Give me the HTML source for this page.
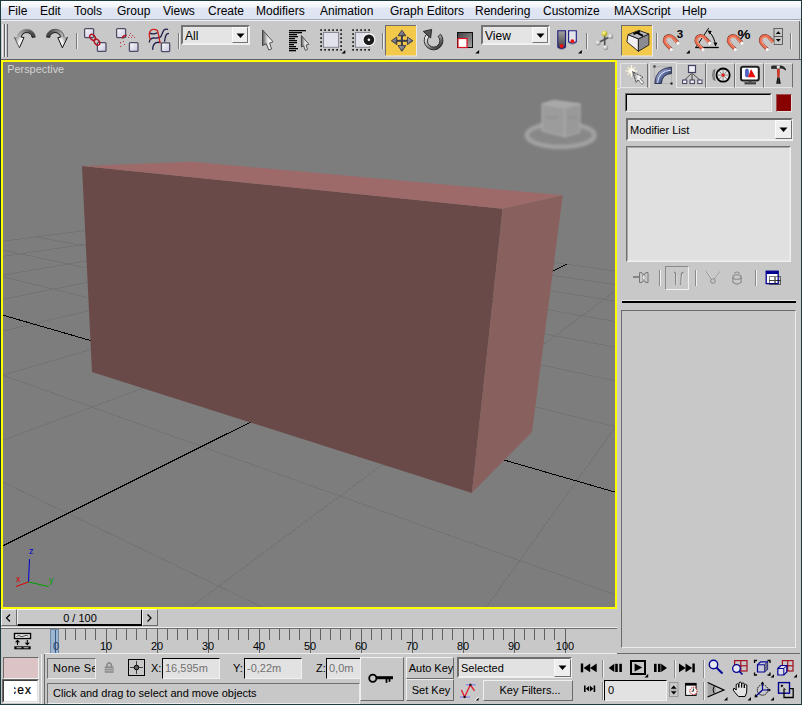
<!DOCTYPE html>
<html><head><meta charset="utf-8">
<style>
*{margin:0;padding:0;box-sizing:border-box}
html,body{width:802px;height:705px;overflow:hidden;background:#c8c8c8;font-family:"Liberation Sans",sans-serif;position:relative}
.a{position:absolute}
.mt{position:absolute;top:4px;font-size:12px;color:#000;white-space:nowrap;line-height:14px}
.sunk{position:absolute;border-style:solid;border-width:1px;border-color:#7a7a7a #fff #fff #7a7a7a}
.rais{position:absolute;border-style:solid;border-width:1px;border-color:#fff #5a5a5a #5a5a5a #fff}
.sep{position:absolute;width:2px;border-left:1px solid #8a8a8a;border-right:1px solid #f0f0f0}
.t11{font-size:11px;line-height:13px;white-space:nowrap}
</style></head><body>
<!-- window frame -->
<div class="a" style="left:0;top:0;width:802px;height:705px;border:1px solid #1f3a3c"></div>

<!-- menu bar -->
<div class="a" style="left:1px;top:1px;width:800px;height:18px;background:linear-gradient(#fcfdfe 0px,#f1f3f9 6px,#e0e6f3 7px,#dde3f1 18px)"></div>
<div class="a" style="left:1px;top:19px;width:800px;height:1px;background:#a3a8b6"></div>
<div class="a" style="left:1px;top:20px;width:800px;height:1px;background:#f2f2f4"></div>
<div class="mt" style="left:8px">File</div>
<div class="mt" style="left:40px">Edit</div>
<div class="mt" style="left:74px">Tools</div>
<div class="mt" style="left:117px">Group</div>
<div class="mt" style="left:163px">Views</div>
<div class="mt" style="left:208px">Create</div>
<div class="mt" style="left:256px">Modifiers</div>
<div class="mt" style="left:320px">Animation</div>
<div class="mt" style="left:390px">Graph Editors</div>
<div class="mt" style="left:475px">Rendering</div>
<div class="mt" style="left:543px">Customize</div>
<div class="mt" style="left:614px">MAXScript</div>
<div class="mt" style="left:682px">Help</div>

<!-- toolbar -->
<div class="a" style="left:1px;top:21px;width:800px;height:38px;background:#c8c8c8"></div>
<div class="a" style="left:1px;top:59px;width:800px;height:1px;background:#5e5e68"></div>
<!-- TOOLBAR_SVG -->
<svg class="a" style="left:0;top:0" width="802" height="60" viewBox="0 0 802 60">
<defs>
<linearGradient id="gUndo" x1="1" y1="0" x2="0" y2="1"><stop offset="0" stop-color="#3a3a3a"/><stop offset="0.55" stop-color="#9a9a9a"/><stop offset="1" stop-color="#f4f4f4"/></linearGradient>
<linearGradient id="gRedo" x1="0" y1="0" x2="1" y2="1"><stop offset="0" stop-color="#3a3a3a"/><stop offset="0.55" stop-color="#9a9a9a"/><stop offset="1" stop-color="#f4f4f4"/></linearGradient>
<linearGradient id="gSq" x1="0" y1="0" x2="1" y2="1"><stop offset="0" stop-color="#ffffff"/><stop offset="1" stop-color="#c4c4dc"/></linearGradient>
<linearGradient id="gPtr" x1="0" y1="0" x2="1" y2="0"><stop offset="0" stop-color="#5a5a5a"/><stop offset="0.5" stop-color="#e8e8e8"/><stop offset="1" stop-color="#ffffff"/></linearGradient>
<linearGradient id="gRot" x1="0" y1="0.2" x2="0.8" y2="1"><stop offset="0" stop-color="#f4f4f4"/><stop offset="0.45" stop-color="#a0a0a0"/><stop offset="1" stop-color="#262626"/></linearGradient>
<linearGradient id="gScl" x1="0" y1="0" x2="1" y2="1"><stop offset="0" stop-color="#3c3c3c"/><stop offset="1" stop-color="#a8a8a8"/></linearGradient>
<linearGradient id="gTube" x1="0" y1="0" x2="0" y2="1"><stop offset="0" stop-color="#a0a0a0"/><stop offset="1" stop-color="#404040"/></linearGradient>
<linearGradient id="gArrowHead" x1="0" y1="0" x2="1" y2="1"><stop offset="0" stop-color="#b4b4c0"/><stop offset="1" stop-color="#4c4c5a"/></linearGradient>
<radialGradient id="gBall" cx="0.35" cy="0.35" r="0.7"><stop offset="0" stop-color="#ffffff"/><stop offset="1" stop-color="#8a8a8a"/></radialGradient>
<radialGradient id="gBallY" cx="0.35" cy="0.35" r="0.7"><stop offset="0" stop-color="#ffff90"/><stop offset="1" stop-color="#b0a020"/></radialGradient>
</defs>
<!-- grip -->
<rect x="2" y="24" width="1" height="33" fill="#f0f0f0"/><rect x="4" y="24" width="1" height="33" fill="#606068"/>
<rect x="5" y="24" width="1" height="33" fill="#ececec"/><rect x="7" y="24" width="1" height="33" fill="#606068"/>
<!-- undo -->
<linearGradient id="gU1" gradientUnits="userSpaceOnUse" x1="35" y1="34" x2="18" y2="38"><stop offset="0" stop-color="#3a3a3a"/><stop offset="0.6" stop-color="#8a8a8a"/><stop offset="1" stop-color="#bcbcbc"/></linearGradient>
<linearGradient id="gU2" gradientUnits="userSpaceOnUse" x1="15" y1="38" x2="23" y2="43"><stop offset="0" stop-color="#8a8a8a"/><stop offset="0.6" stop-color="#f0f0f0"/><stop offset="1" stop-color="#ffffff"/></linearGradient>
<linearGradient id="gR1" gradientUnits="userSpaceOnUse" x1="46.8" y1="34" x2="63.8" y2="38"><stop offset="0" stop-color="#3a3a3a"/><stop offset="0.6" stop-color="#8a8a8a"/><stop offset="1" stop-color="#bcbcbc"/></linearGradient>
<linearGradient id="gR2" gradientUnits="userSpaceOnUse" x1="58" y1="43" x2="67" y2="38"><stop offset="0" stop-color="#ffffff"/><stop offset="0.4" stop-color="#f0f0f0"/><stop offset="1" stop-color="#8a8a8a"/></linearGradient>
<path d="M14.3,37.2 L17.7,37.2 A8.8,7.7 0 0 1 35.5,36.9 L32,37.3 A5.3,4.7 0 0 0 21.4,37.2 L24,37.6 L19.4,47.8 Z" fill="url(#gU1)"/>
<path d="M14.3,37.2 L19.4,47.8 L24,37.6 L21.4,37.2 L17.7,37.2 Z" fill="url(#gU2)"/>
<path d="M35.5,36.9 L32,37.3 A5.3,4.7 0 0 0 21.4,37.2 L24,37.6 L19.4,47.8" stroke="#141414" stroke-width="1" fill="none" stroke-linejoin="round"/>
<path d="M14.3,37.2 L19.4,47.8" stroke="#505050" stroke-width="0.9" fill="none"/>
<path d="M17.7,37.2 A8.8,7.7 0 0 1 35.5,36.9" stroke="#7a7a7a" stroke-width="0.6" fill="none"/>
<!-- redo -->
<path d="M67.5,37.2 L64.1,37.2 A8.8,7.7 0 0 0 46.3,36.9 L49.8,37.3 A5.3,4.7 0 0 1 60.4,37.2 L57.8,37.6 L62.4,47.8 Z" fill="url(#gR1)"/>
<path d="M67.5,37.2 L62.4,47.8 L57.8,37.6 L60.4,37.2 L64.1,37.2 Z" fill="url(#gR2)"/>
<path d="M46.3,36.9 L49.8,37.3 A5.3,4.7 0 0 1 60.4,37.2 L57.8,37.6 L62.4,47.8 L67.5,37.2" stroke="#141414" stroke-width="1" fill="none" stroke-linejoin="round"/>
<path d="M64.1,37.2 A8.8,7.7 0 0 0 46.3,36.9" stroke="#505050" stroke-width="0.8" fill="none"/>
<rect x="76" y="33" width="1" height="16" fill="#7a7a7a"/><rect x="77" y="33" width="1" height="16" fill="#ececec"/>
<!-- link -->
<g stroke="#4c4c66" stroke-width="1.3">
<rect x="84.6" y="28.6" width="9" height="9" rx="1" fill="url(#gSq)"/>
<rect x="97.4" y="42.6" width="8.6" height="8.8" rx="1" fill="url(#gSq)"/>
</g>
<g stroke="#b01020" stroke-width="1.4" fill="none">
<ellipse cx="92.6" cy="37.3" rx="3.4" ry="2.3" transform="rotate(50 92.6 37.3)"/>
<ellipse cx="97" cy="42.2" rx="3.4" ry="2.3" transform="rotate(50 97 42.2)"/>
</g>
<!-- unlink -->
<g stroke="#4c4c66" stroke-width="1.3">
<rect x="116.6" y="28.6" width="9" height="9" rx="1" fill="url(#gSq)"/>
<rect x="129.4" y="42.6" width="8.6" height="8.8" rx="1" fill="url(#gSq)"/>
</g>
<path d="M122.3,38.4 Q123,35 126.6,35.5" stroke="#b01020" stroke-width="1.6" fill="none"/>
<g fill="#c04050">
<rect x="130" y="33" width="1" height="1"/><rect x="129" y="35" width="1" height="1"/><rect x="132" y="35" width="1.2" height="1"/><rect x="128" y="37" width="1" height="1"/><rect x="131" y="37" width="1" height="1"/><rect x="134" y="37" width="1" height="1"/>
<rect x="120" y="42" width="1" height="1.4"/><rect x="120" y="46" width="1.4" height="1"/><rect x="124" y="44" width="1" height="1"/><rect x="123" y="41" width="1" height="1"/>
</g>
<!-- bind space warp -->
<g stroke="#1c1c4c" stroke-width="1.3" fill="none" stroke-linecap="round">
<path d="M149.7,33.1 Q153.5,35 157.3,32.7"/>
<path d="M149.3,42 Q149.8,38.5 153.5,37.8 Q157.8,38.8 160.7,36.9 Q162.4,33 163.7,30.2 Q165.5,28.8 167.6,29.4"/>
<path d="M152.7,49.3 Q152.6,44.6 156,42.6 Q158.5,42 160,42.4"/>
<path d="M164.6,41.2 Q165,37 166.3,34.6 Q167.2,33.6 168.4,33.5"/>
</g>
<path d="M160.1,43.3 Q159,36 157.5,30.6 Q155,29 152,29.6 Q149,31 149.3,35.6 Q149.6,38 150.3,39.5" stroke="#d02020" stroke-width="1.3" fill="none"/>
<rect x="161.4" y="42.9" width="8.3" height="8.7" rx="0.8" fill="url(#gSq)" stroke="#4c4c66" stroke-width="1.3"/>
<rect x="178" y="33" width="1" height="16" fill="#7a7a7a"/><rect x="179" y="33" width="1" height="16" fill="#ececec"/>
<!-- select pointer -->
<path d="M262.5,29.9 L273,41.8 L269.6,43 L271.5,49 L268.8,50 L266.2,43.7 L262.5,45.6 Z" fill="url(#gPtr)" stroke="#303030" stroke-width="0.8" stroke-linejoin="round"/>
<!-- select by name -->
<g fill="#000">
<rect x="289" y="30" width="17" height="1.3"/><rect x="289" y="32" width="13" height="1.3"/><rect x="289" y="34" width="8" height="1.3"/>
<rect x="289" y="36" width="9" height="1.3"/><rect x="289" y="38" width="6" height="1.3"/><rect x="289" y="40" width="8" height="1.3"/>
<rect x="289" y="42" width="8" height="1.3"/><rect x="289" y="44" width="5" height="1.3"/><rect x="289" y="46" width="7" height="1.3"/>
<rect x="289" y="48" width="9" height="1.3"/><rect x="289" y="50" width="7" height="1.3"/>
</g>
<path d="M301.4,35.5 L308.9,44.4 L306,45 L307.5,49.5 L305.3,50.3 L303.6,45.8 L301.4,47 Z" fill="url(#gPtr)" stroke="#303030" stroke-width="0.8" stroke-linejoin="round"/>
<!-- rect select -->
<g fill="#000">
<rect x="320.3" y="29.3" width="1.6" height="1.6"/><rect x="324.3" y="29.3" width="1.6" height="1.6"/><rect x="328.3" y="29.3" width="1.6" height="1.6"/><rect x="332.3" y="29.3" width="1.6" height="1.6"/><rect x="336.3" y="29.3" width="1.6" height="1.6"/><rect x="340.3" y="29.3" width="1.6" height="1.6"/>
<rect x="320.3" y="49" width="1.6" height="1.6"/><rect x="324.3" y="49" width="1.6" height="1.6"/><rect x="328.3" y="49" width="1.6" height="1.6"/><rect x="332.3" y="49" width="1.6" height="1.6"/><rect x="336.3" y="49" width="1.6" height="1.6"/><rect x="340.3" y="49" width="1.6" height="1.6"/>
<rect x="320.3" y="33.3" width="1.6" height="1.6"/><rect x="320.3" y="37.3" width="1.6" height="1.6"/><rect x="320.3" y="41.3" width="1.6" height="1.6"/><rect x="320.3" y="45.3" width="1.6" height="1.6"/>
<rect x="340.3" y="33.3" width="1.6" height="1.6"/><rect x="340.3" y="37.3" width="1.6" height="1.6"/><rect x="340.3" y="41.3" width="1.6" height="1.6"/><rect x="340.3" y="45.3" width="1.6" height="1.6"/>
</g>
<rect x="323.5" y="32.5" width="15" height="14.8" fill="#e2e2ea" stroke="#8a8a96" stroke-width="1"/>
<!-- window crossing -->
<g fill="#000">
<rect x="352.3" y="29.3" width="1.6" height="1.6"/><rect x="356.3" y="29.3" width="1.6" height="1.6"/><rect x="360.3" y="29.3" width="1.6" height="1.6"/><rect x="364.3" y="29.3" width="1.6" height="1.6"/><rect x="368.3" y="29.3" width="1.6" height="1.6"/>
<rect x="352.3" y="49" width="1.6" height="1.6"/><rect x="356.3" y="49" width="1.6" height="1.6"/><rect x="360.3" y="49" width="1.6" height="1.6"/><rect x="364.3" y="49" width="1.6" height="1.6"/><rect x="368.3" y="49" width="1.6" height="1.6"/>
<rect x="352.3" y="33.3" width="1.6" height="1.6"/><rect x="352.3" y="37.3" width="1.6" height="1.6"/><rect x="352.3" y="41.3" width="1.6" height="1.6"/><rect x="352.3" y="45.3" width="1.6" height="1.6"/>
</g>
<rect x="355.5" y="32.5" width="14" height="14.8" fill="#e2e2ea" stroke="#8a8a96" stroke-width="1"/>
<circle cx="368.9" cy="39.7" r="6.6" fill="#f4f4f4"/>
<circle cx="368.9" cy="39.7" r="5.3" fill="#1a1a1a"/>
<circle cx="368.9" cy="39.7" r="1.3" fill="#fff"/>
<rect x="382" y="33" width="1" height="16" fill="#7a7a7a"/><rect x="383" y="33" width="1" height="16" fill="#ececec"/>
<!-- move button -->
<rect x="385" y="25" width="31.5" height="31" fill="#f3c94c"/>
<rect x="385" y="25" width="31" height="1" fill="#6e6e6e"/><rect x="385" y="25" width="1" height="31" fill="#6e6e6e"/>
<rect x="416" y="25" width="1" height="31" fill="#e8e8ee"/><rect x="385" y="55.5" width="32" height="1" fill="#e8e8ee"/>
<g fill="#3c3c48"><rect x="395" y="39.8" width="14" height="2"/><rect x="400.9" y="34" width="2" height="13.5"/></g>
<g fill="url(#gArrowHead)" stroke="#33333f" stroke-width="0.9" stroke-linejoin="round">
<path d="M401.9,30.2 L405.8,35.8 L398,35.8 Z"/><path d="M401.9,51.3 L405.8,45.6 L398,45.6 Z"/>
<path d="M391.4,40.8 L396.8,37 L396.8,44.6 Z"/><path d="M412.9,40.8 L407.4,37 L407.4,44.6 Z"/>
</g>
<!-- rotate -->
<path d="M426.3,34.5 A9.4,9.4 0 1 0 440.6,34.2 L438,36.5 A6.2,6.2 0 1 1 429.2,36.6 Z" fill="url(#gRot)" stroke="#222" stroke-width="0.9"/>
<path d="M423.3,31.4 L431.7,29.4 L430.6,38 Z" fill="#555" stroke="#222" stroke-width="0.9" stroke-linejoin="round"/>
<!-- scale -->
<rect x="457.5" y="32.5" width="15" height="15" fill="url(#gScl)" stroke="#111" stroke-width="1"/>
<rect x="458" y="38.5" width="9" height="9" fill="#fff" stroke="#e01020" stroke-width="1.2"/>
<path d="M475.2,53.6 L479.1,53.6 L479.1,50 Z" fill="#000"/>
<path d="M341.5,53.6 L345.3,53.6 L345.3,50 Z" fill="#000"/>
<!-- pivot -->
<path d="M557.8,30.8 L565.5,30.8 L565.5,47 Q561.6,50 557.8,47 Z" fill="url(#gTube)" stroke="#1c1c80" stroke-width="1.1"/>
<path d="M557,47.5 Q561.6,51.5 566.3,47.5" stroke="#909090" stroke-width="0.8" fill="none"/>
<circle cx="561.6" cy="46" r="1.9" fill="#ee1010"/>
<path d="M568.6,30.8 L576.3,30.8 L576.3,41.8 Q572.4,44.8 568.6,41.8 Z" fill="#e4e4ec" stroke="#1c1c80" stroke-width="1.1"/>
<path d="M567.8,42.3 Q572.4,46.3 577.1,42.3" stroke="#909090" stroke-width="0.8" fill="none"/>
<circle cx="572.4" cy="41.2" r="1.9" fill="#ee1010"/>
<path d="M578,53.6 L581.8,53.6 L581.8,50 Z" fill="#000"/>
<rect x="586" y="33" width="1" height="16" fill="#7a7a7a"/><rect x="587" y="33" width="1" height="16" fill="#ececec"/>
<!-- manipulate -->
<g stroke="#505050" stroke-width="1.6"><line x1="604.6" y1="34" x2="604.8" y2="47"/><line x1="598" y1="42.8" x2="610.5" y2="36.5"/></g>
<circle cx="604.5" cy="33.6" r="2.9" fill="url(#gBallY)"/>
<circle cx="610.6" cy="36.4" r="2.6" fill="url(#gBall)"/>
<circle cx="598" cy="42.8" r="2.6" fill="url(#gBall)"/>
<circle cx="605.6" cy="47.6" r="2.6" fill="url(#gBall)"/>
<!-- keyboard override -->
<rect x="621" y="25" width="31.5" height="31" fill="#f3c94c"/>
<rect x="621" y="25" width="31" height="1" fill="#6e6e6e"/><rect x="621" y="25" width="1" height="31" fill="#6e6e6e"/>
<rect x="652" y="25" width="1" height="31" fill="#e8e8ee"/><rect x="621" y="55.5" width="32" height="1" fill="#e8e8ee"/>
<g stroke="#1a1a1a" stroke-width="0.9" stroke-linejoin="round">
<path d="M626.9,41.9 L628,34.6 L638.4,38.8 L638.4,51.3 Z" fill="#f0f0f4"/>
<path d="M638.4,38.8 L648.9,34 L648.9,45 L638.4,51.3 Z" fill="#8a8a90"/>
<path d="M628,34.6 L638.9,30.4 L648.9,34 L638.4,38.8 Z" fill="#b8b8c0"/>
</g>
<path d="M633.5,34 L639.8,31.4 M636.8,32.7 L643,35.9" stroke="#000" stroke-width="2" fill="none"/>
<rect x="656" y="33" width="1" height="16" fill="#7a7a7a"/><rect x="657" y="33" width="1" height="16" fill="#ececec"/>
<!-- magnets -->
<path d="M695.2,47.5 L718.7,47.5" stroke="#000" stroke-width="1.3"/>
<path d="M696.3,46.6 L708.7,28.1" stroke="#000" stroke-width="1"/>
<g id="mag">
<path d="M671.2,49.3 L666.4,44.4 Q663.2,40.6 665.8,37.2 Q669.4,34.2 673.2,37.8 L677.9,42.8" stroke="#6a3a30" stroke-width="3.6" fill="none"/>
<path d="M671.2,49.3 L666.4,44.4 Q663.2,40.6 665.8,37.2 Q669.4,34.2 673.2,37.8 L677.9,42.8" stroke="#ea6a4c" stroke-width="2.6" fill="none"/>
<path d="M670.6,47.2 L667.2,43.8 Q664.8,40.8 666.6,38.2 Q669.2,36 672.2,38.6 L676,42.6" stroke="#f8b8a4" stroke-width="0.9" fill="none"/>
<rect x="669.9" y="48.3" width="2.6" height="2.6" fill="#fff" transform="rotate(45 671.2 49.6)"/>
<rect x="676.6" y="41.9" width="2.6" height="2.6" fill="#fff" transform="rotate(45 677.9 43.2)"/>
</g>
<use href="#mag" x="31.7" y="0"/>
<use href="#mag" x="64" y="0"/>
<use href="#mag" x="96" y="0"/>
<text x="676.8" y="37.6" font-size="11.5" font-weight="bold" font-family="Liberation Sans" fill="#000">3</text>
<path d="M686,53.6 L689.8,53.6 L689.8,50 Z" fill="#000"/>
<path d="M709.5,32.3 Q714.5,37 715.6,45.9" stroke="#000" stroke-width="1" fill="none"/>
<path d="M707.5,30.5 L711.8,31 L709.5,34.3 Z M715.6,46.4 L713.5,42.5 L717.4,42.7 Z" fill="#000"/>
<text x="737.6" y="38.8" font-size="13.5" font-weight="bold" font-family="Liberation Sans" fill="#000" textLength="13" lengthAdjust="spacingAndGlyphs">%</text>
<rect x="774" y="28.5" width="8.5" height="8" fill="#c8c8c8" stroke="#555" stroke-width="0.9"/>
<rect x="774" y="36.5" width="8.5" height="8" fill="#c8c8c8" stroke="#555" stroke-width="0.9"/>
<path d="M775.8,34 L780.8,34 L778.3,31.2 Z M775.8,39 L780.8,39 L778.3,41.8 Z" fill="#000"/>
<rect x="790" y="33" width="1" height="16" fill="#7a7a7a"/><rect x="791" y="33" width="1" height="16" fill="#ececec"/>
<rect x="799" y="21" width="1" height="38" fill="#6a6a6a"/>
<rect x="800" y="21" width="1" height="38" fill="#d8d8d8"/>
</svg>

<!-- /TOOLBAR_SVG -->
<!-- DROPDOWNS -->
<div class="a" style="left:181px;top:25px;width:69px;height:20px;border:2px solid;border-color:#747474 #f0f0f0 #f0f0f0 #747474;background:#e4e4e4"></div>
<div class="a t11" style="left:185px;top:30px;color:#000;font-size:12px">All</div>
<div class="a" style="left:232px;top:27px;width:16px;height:16px;background:#eeeeee;border:1px solid;border-color:#fafafa #747474 #747474 #fafafa"></div>
<svg class="a" style="left:236px;top:33px" width="9" height="6"><polygon points="0.5,0.5 8.5,0.5 4.5,5" fill="#000"/></svg>
<div class="a" style="left:481px;top:25px;width:69px;height:20px;border:2px solid;border-color:#747474 #f0f0f0 #f0f0f0 #747474;background:#e4e4e4"></div>
<div class="a t11" style="left:485px;top:30px;color:#000;font-size:12px">View</div>
<div class="a" style="left:532px;top:27px;width:16px;height:16px;background:#eeeeee;border:1px solid;border-color:#fafafa #747474 #747474 #fafafa"></div>
<svg class="a" style="left:536px;top:33px" width="9" height="6"><polygon points="0.5,0.5 8.5,0.5 4.5,5" fill="#000"/></svg>


<!-- viewport -->
<div class="a" style="left:1px;top:60px;width:616px;height:549px;background:#ffff00"></div>
<svg class="a" style="left:3px;top:62px" width="612" height="545" viewBox="3 62 612 545">
<rect x="3" y="62" width="612" height="545" fill="#7d7d7d"/>
<g stroke="#737373" stroke-width="1" shape-rendering="crispEdges"><line x1="21680.1" y1="10527.1" x2="1282.0" y2="363.6"/><line x1="-21440.4" y1="8753.0" x2="-1833.6" y2="477.6"/><line x1="16182.3" y1="10300.9" x2="1138.7" y2="343.7"/><line x1="-13004.7" y1="9100.1" x2="-1323.7" y2="412.0"/><line x1="10684.4" y1="10074.7" x2="1013.5" y2="326.3"/><line x1="-4569.0" y1="9447.1" x2="-977.9" y2="367.5"/><line x1="5186.6" y1="9848.5" x2="903.0" y2="310.9"/><line x1="3866.6" y1="9794.2" x2="-728.1" y2="335.3"/><line x1="-311.3" y1="9622.3" x2="804.8" y2="297.3"/><line x1="12302.3" y1="10141.2" x2="-539.0" y2="311.0"/><line x1="-5809.1" y1="9396.1" x2="717.0" y2="285.1"/><line x1="20738.0" y1="10488.3" x2="-391.1" y2="291.9"/><line x1="-11306.9" y1="9169.9" x2="638.0" y2="274.1"/><line x1="4649.0" y1="2041.2" x2="-272.1" y2="276.6"/><line x1="-14467.9" y1="5810.2" x2="501.5" y2="255.2"/><line x1="2171.6" y1="806.8" x2="-92.5" y2="253.5"/><line x1="-5165.3" y1="1883.8" x2="442.3" y2="246.9"/><line x1="1842.0" y1="642.6" x2="-23.2" y2="244.5"/><line x1="-3416.7" y1="1145.8" x2="387.9" y2="239.4"/><line x1="1641.9" y1="542.9" x2="36.5" y2="236.9"/><line x1="-2678.1" y1="834.1" x2="337.9" y2="232.4"/><line x1="1507.6" y1="476.0" x2="88.2" y2="230.2"/><line x1="-2270.4" y1="662.0" x2="291.8" y2="226.0"/><line x1="1411.2" y1="427.9" x2="133.6" y2="224.3"/><line x1="-2012.0" y1="552.9" x2="249.1" y2="220.1"/><line x1="1338.6" y1="391.8" x2="173.8" y2="219.2"/><line x1="-1833.6" y1="477.6" x2="209.5" y2="214.6"/><line x1="1282.0" y1="363.6" x2="209.5" y2="214.6"/></g>
<g stroke="#000" stroke-width="1" shape-rendering="crispEdges"><line x1="2817.0" y1="1128.4" x2="-174.3" y2="264.0"/><line x1="-16804.8" y1="8943.7" x2="566.5" y2="264.2"/></g>
<polygon points="82,166 502.6,208.7 471.9,493 92,372" fill="#694a48"/>
<polygon points="502.6,208.7 562.7,195.3 532,432 471.9,493" fill="#88605d"/>
<polygon points="82,166 192.4,161.8 562.7,195.3 502.6,208.7" fill="#9d6a69"/>
<!-- viewcube -->
<defs><filter id="blur1" x="-20%" y="-20%" width="140%" height="140%"><feGaussianBlur stdDeviation="0.8"/></filter>
<filter id="blur2" x="-20%" y="-50%" width="140%" height="200%"><feGaussianBlur stdDeviation="1.6"/></filter></defs>
<g filter="url(#blur2)">
<ellipse cx="560.7" cy="135.2" rx="34" ry="11.8" fill="#888888" stroke="#a6a6a6" stroke-width="4"/>
</g>
<g filter="url(#blur1)">
<polygon points="542,104 553.5,100.4 580.3,103.9 565,107.8" fill="#a8a8a8" stroke="#b4b4b4" stroke-width="1"/>
<polygon points="542,104 565,107.8 565,136.8 542,130.8" fill="#9c9c9c" stroke="#b0b0b0" stroke-width="1"/>
<polygon points="565,107.8 580.3,103.9 579.7,132.4 565,136.8" fill="#999999" stroke="#acacac" stroke-width="1"/>
</g>
<g fill="#8e8e8e" opacity="0.5" filter="url(#blur1)"><rect x="546" y="116" width="12" height="3"/><rect x="568" y="116" width="9" height="3"/></g>
<!-- tripod -->
<g stroke-width="1" fill="none">
<polyline points="28.5,582 29.5,559" stroke="#0000d0"/>
<polyline points="28.5,582 16,586.5" stroke="#e00000"/>
<polyline points="28.5,582 48.5,586.5" stroke="#00a000"/>
</g>
<text x="29" y="554" font-size="9" fill="#0000d0" font-family="Liberation Sans">z</text>
<text x="16" y="582" font-size="9" fill="#e00000" font-family="Liberation Sans">x</text>
<text x="49" y="583" font-size="9" fill="#00a000" font-family="Liberation Sans">y</text>
<text x="7.2" y="73.2" font-size="11" fill="#d2d2d2" font-family="Liberation Sans" textLength="57" lengthAdjust="spacingAndGlyphs">Perspective</text>
</svg>

<!-- command panel -->
<div class="a" style="left:617px;top:60px;width:184px;height:594px;background:#c8c8c8"></div>
<!-- tabs -->
<div class="a" style="left:620px;top:63px;width:28px;height:25px;border:1px solid #e4e4e4;border-right-color:#6e6e6e;border-bottom-color:#e4e4e4;border-radius:2px 2px 0 0"></div>
<div class="a" style="left:649px;top:62px;width:28px;height:26px;border:1px solid #e8e8e8;border-bottom:none;border-radius:2px 2px 0 0"></div>
<div class="a" style="left:677px;top:63px;width:29px;height:25px;border:1px solid #e4e4e4;border-right-color:#6e6e6e;border-bottom-color:#e4e4e4;border-left:none"></div>
<div class="a" style="left:706px;top:63px;width:29px;height:25px;border:1px solid #e4e4e4;border-right-color:#6e6e6e;border-bottom-color:#e4e4e4"></div>
<div class="a" style="left:735px;top:63px;width:29px;height:25px;border:1px solid #e4e4e4;border-right-color:#6e6e6e;border-bottom-color:#e4e4e4"></div>
<div class="a" style="left:764px;top:63px;width:29px;height:25px;border:1px solid #e4e4e4;border-right-color:#6e6e6e;border-bottom-color:#e4e4e4"></div>
<div class="a" style="left:617px;top:88px;width:3px;height:1px;background:#e4e4e4"></div>
<!-- name field -->
<div class="a" style="left:625px;top:93px;width:147px;height:19px;border:1px solid;border-color:#6a6a6a #f0f0f0 #f0f0f0 #6a6a6a;background:#e0e0e0"></div>
<div class="a" style="left:626px;top:94px;width:145px;height:17px;border:1px solid;border-color:#000 #d8d8d8 #d8d8d8 #000"></div>
<div class="a" style="left:776px;top:94px;width:16px;height:18px;background:#880000;border:1px solid;border-color:#a05050 #e0e0e0 #e0e0e0 #a05050"></div>
<!-- modifier list -->
<div class="a" style="left:626px;top:118px;width:167px;height:23px;border:2px solid;border-color:#6e6e6e #f0f0f0 #f0f0f0 #6e6e6e;background:#e2e2e2"></div>
<div class="a t11" style="left:630px;top:124px;color:#000">Modifier List</div>
<div class="a" style="left:775px;top:120px;width:17px;height:19px;background:#eeeeee;border:1px solid;border-color:#fafafa #6e6e6e #6e6e6e #fafafa"></div>
<svg class="a" style="left:779px;top:127px" width="9" height="6"><polygon points="0.5,0.5 8.5,0.5 4.5,5" fill="#000"/></svg>
<!-- stack -->
<div class="a" style="left:626px;top:146px;width:165px;height:116px;border:1px solid;border-color:#6e6e6e #f0f0f0 #f0f0f0 #6e6e6e;background:#e0e0e0"></div>
<div class="a" style="left:627px;top:147px;width:163px;height:114px;border:1px solid;border-color:#a8a8a8 #e8e8e8 #e8e8e8 #a8a8a8"></div>
<!-- stack seps -->
<div class="sep" style="left:659px;top:270px;height:16px"></div>
<div class="a" style="left:665px;top:266px;width:24px;height:24px;border:1px solid;border-color:#8a8a8a #f0f0f0 #f0f0f0 #8a8a8a"></div>
<div class="sep" style="left:695px;top:270px;height:16px"></div>
<div class="sep" style="left:755px;top:270px;height:16px"></div>
<!-- TABS_SVG -->
<svg class="a" style="left:617px;top:60px" width="185" height="245" viewBox="617 60 185 245">
<defs>
<radialGradient id="gStar" cx="0.5" cy="0.5" r="0.5"><stop offset="0" stop-color="#ffffff"/><stop offset="0.35" stop-color="#fff4c0"/><stop offset="1" stop-color="#c8c8c8" stop-opacity="0"/></radialGradient>
<linearGradient id="gArc" gradientUnits="userSpaceOnUse" x1="656" y1="70" x2="670" y2="82"><stop offset="0" stop-color="#c8d0f0"/><stop offset="0.5" stop-color="#5a6a9a"/><stop offset="1" stop-color="#1a2040"/></linearGradient>
<linearGradient id="gP2" x1="0" y1="0" x2="1" y2="0"><stop offset="0" stop-color="#707070"/><stop offset="0.5" stop-color="#f0f0f0"/><stop offset="1" stop-color="#ffffff"/></linearGradient>
</defs>
<!-- create tab -->
<circle cx="631.5" cy="71" r="5.5" fill="url(#gStar)"/>
<g stroke="#fffce8" stroke-width="1" opacity="0.95"><line x1="631.5" y1="65" x2="631.5" y2="77"/><line x1="625.5" y1="71" x2="637.5" y2="71"/><line x1="627.5" y1="67" x2="635.5" y2="75"/><line x1="635.5" y1="67" x2="627.5" y2="75"/></g>
<circle cx="631.8" cy="71.2" r="2.2" fill="#ffffff"/>
<path d="M632.5,71.6 L643,77.2 L640.2,78.6 L643.8,82.6 L641.8,84.2 L638.2,79.8 L636.2,82.6 Z" fill="url(#gP2)" stroke="#202020" stroke-width="0.8" stroke-linejoin="round" stroke-dasharray="1.2,0.5"/>
<!-- modify tab -->
<g fill="#000"><rect x="653.5" y="65.5" width="2" height="2"/><rect x="670.5" y="82.5" width="2" height="2"/></g>
<path d="M654.5,66.5 L671.5,66.5 L671.5,83.5" stroke="#8a8a8a" stroke-width="0.6" stroke-dasharray="1,1" fill="none"/>
<path d="M654.5,66.5 L654.5,83.5 L671.5,83.5" stroke="#8a8a8a" stroke-width="0.6" stroke-dasharray="1,1" fill="none"/>
<path d="M654.8,83.5 Q655.5,68 671.4,67.2 L671.4,73.6 Q662,74 661.4,83.5 Z" fill="url(#gArc)" stroke="#1a1e38" stroke-width="0.8"/>
<path d="M657.5,83 Q658.4,71 670.8,70.2" stroke="#e0e6ff" stroke-width="1" fill="none"/>
<!-- hierarchy -->
<rect x="688.5" y="65.5" width="7" height="7" fill="#eeeef4" stroke="#404060" stroke-width="1.2"/>
<g stroke="#404040" stroke-width="0.9"><line x1="692" y1="73" x2="684.6" y2="80"/><line x1="692" y1="73" x2="699.8" y2="80"/></g>
<rect x="691.3" y="73" width="1.6" height="7" fill="#707070"/>
<rect x="682.6" y="80" width="4.2" height="3.6" fill="#eeeef4" stroke="#404060" stroke-width="1"/>
<rect x="690" y="80" width="4.4" height="3.6" fill="#eeeef4" stroke="#404060" stroke-width="1"/>
<rect x="697.8" y="80" width="4.2" height="3.6" fill="#eeeef4" stroke="#404060" stroke-width="1"/>
<!-- motion -->
<path d="M713.5,70 Q711.8,75 713.5,80" stroke="#404040" stroke-width="0.7" fill="none"/>
<path d="M715,69 Q712.8,75 715,81" stroke="#404040" stroke-width="0.7" fill="none"/>
<circle cx="723.1" cy="75.1" r="6.6" fill="#e4e4e4" stroke="#000" stroke-width="1.8"/>
<g stroke="#505050" stroke-width="0.6"><line x1="723.1" y1="69.5" x2="723.1" y2="80.7"/><line x1="717.5" y1="75.1" x2="728.7" y2="75.1"/><line x1="719.1" y1="71.1" x2="727.1" y2="79.1"/><line x1="727.1" y1="71.1" x2="719.1" y2="79.1"/></g>
<circle cx="723.1" cy="75.1" r="1.6" fill="#ee1010"/>
<!-- display -->
<rect x="741" y="66.7" width="17.8" height="13.8" rx="2" fill="#fff" stroke="#202020" stroke-width="2"/>
<rect x="745.4" y="69" width="3" height="8" rx="1.4" fill="#5060d0" stroke="#203080" stroke-width="0.5"/>
<path d="M751,69 L755.6,77.3 L748,77.3 Z" fill="#e81010"/>
<rect x="744.5" y="82.2" width="11.5" height="2.2" fill="#404040"/>
<rect x="749" y="80.6" width="2.5" height="1.6" fill="#404040"/>
<!-- utilities hammer -->
<path d="M771,66.8 Q771.5,65.2 774,65.4 L777,65.6 L781,65.4 Q785,66 786.2,69.8 L785.4,70.4 Q783.5,68.6 781,68.6 L777,69 L774,68.8 Q772,69.4 771.4,68.8 Z" fill="#2a2a2a"/>
<path d="M776.8,65.8 L779.6,65.6 L779.8,68.4 L776.8,68.6 Z" fill="#e8e8e8"/>
<path d="M776.9,69 L779.9,69 L779.6,77.5 L777.2,77.5 Z" fill="#c83828"/>
<path d="M777.2,77.5 L779.6,77.5 L780.8,83.8 L776.2,83.8 Z" fill="#101010"/>
<path d="M778,78 L778.4,83" stroke="#606060" stroke-width="0.5"/>
<!-- stack buttons -->
<rect x="633" y="276.2" width="6.5" height="1.6" fill="#767676"/>
<path d="M639.5,272.6 L641.8,272.6 L642.6,274.2 L645,274.2 L645.8,272.6 L648,272.6 L648,282.6 L645.8,282.6 L645,281 L642.6,281 L641.8,282.6 L639.5,282.6 Z" fill="#c8c8c8" stroke="#767676" stroke-width="1"/>
<rect x="642.6" y="275.5" width="2.4" height="4.2" fill="#e8e8e8" stroke="#888" stroke-width="0.5"/>
<g stroke="#7a7a7a" stroke-width="1.1" fill="none"><path d="M675.8,285 L675.6,274 Q675.4,272.4 674,272"/><path d="M680.8,285 L681.4,274 Q682,272.4 683.4,272"/></g>
<g stroke="#f0f0f0" stroke-width="0.6" fill="none"><path d="M676.8,285 L676.6,274.5"/><path d="M681.8,285 L682.3,274.5"/></g>
<g stroke="#8a8a8a" stroke-width="1" fill="none"><path d="M706.2,271.3 L711.4,279"/><path d="M720.2,271.3 L714.5,279"/><circle cx="712.9" cy="281" r="2.3" fill="#c8c8c8"/></g>
<g stroke="#f2f2f2" stroke-width="0.5" fill="none"><path d="M707,271.3 L712,278.5"/><path d="M721,271.3 L715.3,278.5"/></g>
<g stroke="#8a8a8a" stroke-width="1.1" fill="none"><ellipse cx="737" cy="277" rx="4.2" ry="2.3"/><path d="M732.8,277 L732.8,282.2 Q737,286 741.2,282.2 L741.2,277"/><path d="M734.2,273.6 Q737,270.5 739.8,273.6"/></g>
<rect x="766.2" y="271.2" width="12" height="12.4" fill="#fff" stroke="#000090" stroke-width="1.3"/>
<rect x="766.2" y="271.2" width="12" height="2.8" fill="#000090"/>
<g stroke="#000" stroke-width="1" stroke-dasharray="1,1" fill="none"><rect x="769.5" y="276.5" width="5" height="4"/><rect x="775.5" y="276.5" width="5" height="4"/><rect x="769.5" y="280.5" width="5" height="4"/><rect x="775.5" y="280.5" width="5" height="4"/></g>
</svg>

<!-- /TABS_SVG -->
<!-- separator -->
<div class="a" style="left:622px;top:300px;width:174px;height:1px;background:#e6e6e6"></div>
<div class="a" style="left:622px;top:301px;width:174px;height:2px;background:#000"></div>
<!-- rollout -->
<div class="a" style="left:621px;top:310px;width:175px;height:338px;border:1px solid;border-color:#6a6a6a #ececec #ececec #6a6a6a"></div>
<div class="a" style="left:617px;top:653px;width:183px;height:1px;background:#6a6a6a"></div>

<!-- time slider -->
<div class="a" style="left:1px;top:609px;width:616px;height:18px;background:#c8c8c8"></div>
<div class="a" style="left:1px;top:609px;width:16px;height:17px;border:1px solid;border-color:#f0f0f0 #6a6a6a #6a6a6a #f0f0f0"></div>
<div class="a" style="left:17px;top:609px;width:126px;height:17px;border:1px solid;border-color:#f0f0f0 #000 #000 #f0f0f0;border-width:1px 2px 2px 1px"></div>
<div class="a t11" style="left:17px;top:612px;width:126px;text-align:center;color:#000">0 / 100</div>
<div class="a" style="left:142px;top:609px;width:16px;height:17px;border:1px solid;border-color:#f0f0f0 #6a6a6a #6a6a6a #f0f0f0"></div>
<svg class="a" style="left:0;top:605px" width="160" height="22"><polyline points="10,9.5 6.5,13 10,16.5" fill="none" stroke="#000" stroke-width="1.2"/><polyline points="147.5,9.5 151,13 147.5,16.5" fill="none" stroke="#000" stroke-width="1.2"/></svg>
<div class="a" style="left:1px;top:627px;width:616px;height:1px;background:#ececec"></div>
<div class="a" style="left:1px;top:628px;width:616px;height:1px;background:#6e6e6e"></div>
<!-- track bar -->
<div class="a" style="left:50px;top:629px;width:9px;height:25px;background:#9cb6d2;border:1px solid #6f8aa8"></div>
<div class="a" style="left:55px;top:630px;width:1px;height:23px;background:#3a5a80"></div><div class="a" style="left:65px;top:629px;width:1px;height:11px;background:#626262"></div><div class="a" style="left:75px;top:629px;width:1px;height:11px;background:#626262"></div><div class="a" style="left:85px;top:629px;width:1px;height:11px;background:#626262"></div><div class="a" style="left:95px;top:629px;width:1px;height:11px;background:#626262"></div><div class="a" style="left:106px;top:629px;width:1px;height:24px;background:#626262"></div><div class="a" style="left:116px;top:629px;width:1px;height:11px;background:#626262"></div><div class="a" style="left:126px;top:629px;width:1px;height:11px;background:#626262"></div><div class="a" style="left:136px;top:629px;width:1px;height:11px;background:#626262"></div><div class="a" style="left:146px;top:629px;width:1px;height:11px;background:#626262"></div><div class="a" style="left:157px;top:629px;width:1px;height:24px;background:#626262"></div><div class="a" style="left:167px;top:629px;width:1px;height:11px;background:#626262"></div><div class="a" style="left:177px;top:629px;width:1px;height:11px;background:#626262"></div><div class="a" style="left:187px;top:629px;width:1px;height:11px;background:#626262"></div><div class="a" style="left:197px;top:629px;width:1px;height:11px;background:#626262"></div><div class="a" style="left:208px;top:629px;width:1px;height:24px;background:#626262"></div><div class="a" style="left:218px;top:629px;width:1px;height:11px;background:#626262"></div><div class="a" style="left:228px;top:629px;width:1px;height:11px;background:#626262"></div><div class="a" style="left:238px;top:629px;width:1px;height:11px;background:#626262"></div><div class="a" style="left:248px;top:629px;width:1px;height:11px;background:#626262"></div><div class="a" style="left:259px;top:629px;width:1px;height:24px;background:#626262"></div><div class="a" style="left:269px;top:629px;width:1px;height:11px;background:#626262"></div><div class="a" style="left:279px;top:629px;width:1px;height:11px;background:#626262"></div><div class="a" style="left:289px;top:629px;width:1px;height:11px;background:#626262"></div><div class="a" style="left:299px;top:629px;width:1px;height:11px;background:#626262"></div><div class="a" style="left:310px;top:629px;width:1px;height:24px;background:#626262"></div><div class="a" style="left:320px;top:629px;width:1px;height:11px;background:#626262"></div><div class="a" style="left:330px;top:629px;width:1px;height:11px;background:#626262"></div><div class="a" style="left:340px;top:629px;width:1px;height:11px;background:#626262"></div><div class="a" style="left:350px;top:629px;width:1px;height:11px;background:#626262"></div><div class="a" style="left:361px;top:629px;width:1px;height:24px;background:#626262"></div><div class="a" style="left:371px;top:629px;width:1px;height:11px;background:#626262"></div><div class="a" style="left:381px;top:629px;width:1px;height:11px;background:#626262"></div><div class="a" style="left:391px;top:629px;width:1px;height:11px;background:#626262"></div><div class="a" style="left:401px;top:629px;width:1px;height:11px;background:#626262"></div><div class="a" style="left:412px;top:629px;width:1px;height:24px;background:#626262"></div><div class="a" style="left:422px;top:629px;width:1px;height:11px;background:#626262"></div><div class="a" style="left:432px;top:629px;width:1px;height:11px;background:#626262"></div><div class="a" style="left:442px;top:629px;width:1px;height:11px;background:#626262"></div><div class="a" style="left:452px;top:629px;width:1px;height:11px;background:#626262"></div><div class="a" style="left:463px;top:629px;width:1px;height:24px;background:#626262"></div><div class="a" style="left:473px;top:629px;width:1px;height:11px;background:#626262"></div><div class="a" style="left:483px;top:629px;width:1px;height:11px;background:#626262"></div><div class="a" style="left:493px;top:629px;width:1px;height:11px;background:#626262"></div><div class="a" style="left:503px;top:629px;width:1px;height:11px;background:#626262"></div><div class="a" style="left:514px;top:629px;width:1px;height:24px;background:#626262"></div><div class="a" style="left:524px;top:629px;width:1px;height:11px;background:#626262"></div><div class="a" style="left:534px;top:629px;width:1px;height:11px;background:#626262"></div><div class="a" style="left:544px;top:629px;width:1px;height:11px;background:#626262"></div><div class="a" style="left:554px;top:629px;width:1px;height:11px;background:#626262"></div><div class="a" style="left:565px;top:629px;width:1px;height:24px;background:#626262"></div>
<div class="a t11" style="left:41px;top:640px;width:30px;text-align:center;color:#1a3a6a">0</div><div class="a t11" style="left:91px;top:640px;width:30px;text-align:center;color:#000">10</div><div class="a t11" style="left:142px;top:640px;width:30px;text-align:center;color:#000">20</div><div class="a t11" style="left:193px;top:640px;width:30px;text-align:center;color:#000">30</div><div class="a t11" style="left:244px;top:640px;width:30px;text-align:center;color:#000">40</div><div class="a t11" style="left:295px;top:640px;width:30px;text-align:center;color:#000">50</div><div class="a t11" style="left:346px;top:640px;width:30px;text-align:center;color:#000">60</div><div class="a t11" style="left:397px;top:640px;width:30px;text-align:center;color:#000">70</div><div class="a t11" style="left:448px;top:640px;width:30px;text-align:center;color:#000">80</div><div class="a t11" style="left:499px;top:640px;width:30px;text-align:center;color:#000">90</div><div class="a t11" style="left:550px;top:640px;width:30px;text-align:center;color:#000">100</div>
<div class="a" style="left:44px;top:653px;width:573px;height:1px;background:#ececec"></div>
<!-- status area -->
<div class="a" style="left:3px;top:657px;width:36px;height:22px;border:1px solid;border-color:#6a6a6a #f0f0f0 #f0f0f0 #6a6a6a;background:#dcc4c6"></div>
<div class="a" style="left:2px;top:679px;width:37px;height:24px;border:1px solid;border-color:#6a6a6a #f0f0f0 #f0f0f0 #6a6a6a;background:#fff"></div>
<div class="a" style="left:3px;top:680px;width:35px;height:22px;border:1px solid;border-color:#404040 #e0e0e0 #e0e0e0 #404040"></div>
<div class="a" style="left:14px;top:683px;width:22px;height:16px;overflow:hidden"><div class="a" style="left:-4px;top:0;font-size:12px;line-height:14px;font-family:'Liberation Sans',sans-serif;color:#000;letter-spacing:1.2px;-webkit-text-stroke:0.2px #000">cex</div></div>
<div class="a" style="left:41px;top:654px;width:1px;height:50px;background:#f0f0f0"></div>
<div class="a" style="left:44px;top:654px;width:1px;height:50px;background:#6a6a6a"></div>
<div class="a" style="left:47px;top:658px;width:49px;height:21px;border:1px solid;border-color:#707070 #ececec #ececec #707070"></div>
<div class="a t11" style="left:53px;top:662px;width:42px;overflow:hidden;color:#000;letter-spacing:0.3px">None Selected</div>
<div class="a" style="left:128px;top:659px;width:17px;height:17px;border:1.5px solid #000"></div>
<div class="a t11" style="left:151px;top:662px;color:#000">X:</div>
<div class="a" style="left:162px;top:658px;width:58px;height:21px;border:1px solid;border-color:#000 #f0f0f0 #f0f0f0 #000;background:#e2e2e2"></div>
<div class="a t11" style="left:165px;top:662px;color:#707070">16,595m</div>
<div class="a t11" style="left:233px;top:662px;color:#000">Y:</div>
<div class="a" style="left:244px;top:658px;width:58px;height:21px;border:1px solid;border-color:#000 #f0f0f0 #f0f0f0 #000;background:#e2e2e2"></div>
<div class="a t11" style="left:247px;top:662px;color:#707070">-0,22m</div>
<div class="a t11" style="left:316px;top:662px;color:#000">Z:</div>
<div class="a" style="left:326px;top:658px;width:35px;height:21px;border:1px solid;border-color:#000 #f0f0f0 #f0f0f0 #000;background:#e2e2e2;overflow:hidden"></div>
<div class="a t11" style="left:329px;top:662px;color:#707070">0,0m</div>
<div class="a" style="left:47px;top:683px;width:313px;height:21px;border:1px solid;border-color:#707070 #ececec #ececec #707070"></div>
<div class="a t11" style="left:53px;top:687px;color:#000">Click and drag to select and move objects</div>
<div class="a" style="left:360px;top:657px;width:44px;height:44px;border:1px solid;border-color:#f0f0f0 #6a6a6a #6a6a6a #f0f0f0"></div>
<div class="a" style="left:406px;top:657px;width:48px;height:22px;border:1px solid;border-color:#f0f0f0 #6a6a6a #6a6a6a #f0f0f0"></div>
<div class="a t11" style="left:407px;top:662px;width:48px;text-align:center;color:#000">Auto Key</div>
<div class="a" style="left:406px;top:679px;width:48px;height:22px;border:1px solid;border-color:#f0f0f0 #6a6a6a #6a6a6a #f0f0f0"></div>
<div class="a t11" style="left:407px;top:684px;width:48px;text-align:center;color:#000">Set Key</div>
<div class="a" style="left:457px;top:657px;width:115px;height:21px;border:2px solid;border-color:#6e6e6e #f0f0f0 #f0f0f0 #6e6e6e;background:#e2e2e2"></div>
<div class="a t11" style="left:461px;top:662px;color:#000">Selected</div>
<div class="a" style="left:554px;top:659px;width:17px;height:18px;background:#eeeeee;border:1px solid;border-color:#fafafa #6e6e6e #6e6e6e #fafafa"></div>
<svg class="a" style="left:558px;top:665px" width="9" height="6"><polygon points="0.5,0.5 8.5,0.5 4.5,5" fill="#000"/></svg>
<div class="a" style="left:483px;top:680px;width:90px;height:21px;border:1px solid;border-color:#f0f0f0 #6a6a6a #6a6a6a #f0f0f0"></div>
<div class="a t11" style="left:486px;top:684px;width:88px;text-align:center;color:#000">Key Filters...</div>
<div class="sep" style="left:602px;top:660px;height:18px"></div>
<div class="sep" style="left:674px;top:660px;height:18px"></div>
<div class="sep" style="left:602px;top:682px;height:18px"></div>
<div class="a" style="left:604px;top:680px;width:63px;height:21px;border:1px solid;border-color:#000 #f0f0f0 #f0f0f0 #000;background:#e2e2e2"></div>
<div class="a t11" style="left:608px;top:684px;color:#000">0</div>
<div class="sep" style="left:703px;top:660px;height:18px"></div>
<div class="sep" style="left:703px;top:682px;height:18px"></div>

<!-- BOTTOM_SVG -->
<svg class="a" style="left:0;top:605px" width="802" height="100" viewBox="0 605 802 100">
<!-- track bar icon -->
<rect x="14.5" y="633.5" width="16" height="5" fill="#fff" stroke="#000" stroke-width="1.4"/>
<path d="M16.5,636.5 Q18,635 20,636 T24,636 T28.5,636" stroke="#000" stroke-width="0.8" fill="none"/>
<path d="M17.5,645 L17.5,640.6 M15.6,642.4 L17.5,640.4 L19.4,642.4 M27.3,640 L27.3,644.6 M25.4,642.6 L27.3,644.6 L29.2,642.6" stroke="#000" stroke-width="1.1" fill="none"/>
<rect x="14.3" y="646.3" width="16.4" height="3" fill="#000"/>
<rect x="16.5" y="647.4" width="5" height="0.8" fill="#fff"/><rect x="23.5" y="647.4" width="5" height="0.8" fill="#fff"/>
<!-- lock -->
<path d="M107,667 L107,664.6 Q109.2,660.8 111.4,664.6 L111.4,667" stroke="#848484" stroke-width="1.5" fill="none"/>
<rect x="104.8" y="666.4" width="8.8" height="6.4" fill="#8c8c8c"/>
<g fill="#bcbcbc"><rect x="105.4" y="668.2" width="7.6" height="0.9"/><rect x="105.4" y="670.3" width="7.6" height="0.9"/></g>
<!-- absolute crosshair -->
<g stroke="#404040" stroke-width="1"><line x1="136.5" y1="661" x2="136.5" y2="674"/><line x1="130" y1="667.5" x2="143" y2="667.5"/></g>
<circle cx="136.5" cy="667.5" r="2.3" fill="#606060" stroke="#000" stroke-width="1"/>
<!-- key -->
<circle cx="372.8" cy="678.2" r="3.6" fill="none" stroke="#000" stroke-width="1.8"/>
<rect x="376" y="676.2" width="17" height="3" fill="#000"/>
<rect x="385.6" y="679" width="1.8" height="3.8" fill="#000"/><rect x="388.6" y="679" width="1.8" height="2.8" fill="#000"/>
<!-- key filter icon -->
<g stroke="#8a8ae8" stroke-width="1.4"><line x1="460" y1="697" x2="470" y2="697"/><line x1="466" y1="684.8" x2="475.5" y2="684.8"/></g>
<path d="M461.4,690 L464.6,697 L470.4,684.8 L474.5,690.8" stroke="#e01828" stroke-width="1.3" fill="none"/>
<rect x="463.6" y="696" width="2" height="2" fill="#101010"/><rect x="469.4" y="683.8" width="2" height="2" fill="#101010"/>
<path d="M474.3,700.5 L478.6,700.5 L478.6,696.2 Z" fill="#fff"/><path d="M475.6,700.5 L478.6,700.5 L478.6,697.5 Z" fill="#000"/>
<!-- playback -->
<g fill="#000">
<rect x="580.8" y="663.5" width="2.4" height="8.8"/>
<path d="M583.5,667.9 L590.2,663.5 L590.2,672.3 Z"/><path d="M590,667.9 L596.7,663.5 L596.7,672.3 Z"/>
<path d="M608.7,667.9 L614.3,663.8 L614.3,672 Z"/>
<rect x="615.2" y="663.8" width="2.6" height="8.2"/><rect x="619.3" y="663.8" width="2.6" height="8.2"/>
<path d="M634.6,663.6 L642.2,667.6 L634.6,671.6 Z"/>
<rect x="654" y="663.8" width="2.6" height="8.2"/><rect x="658" y="663.8" width="2.6" height="8.2"/>
<path d="M667,667.9 L661.2,663.8 L661.2,672 Z"/>
<path d="M679,663.5 L685.7,667.9 L679,672.3 Z"/><path d="M685.5,663.5 L692.2,667.9 L685.5,672.3 Z"/>
<rect x="692.4" y="663.5" width="2.4" height="8.8"/>
<path d="M644.5,677.5 L648.2,677.5 L648.2,673.8 Z"/>
<!-- key mode -->
<rect x="584" y="685.5" width="1.6" height="6.5"/><rect x="593.6" y="685.5" width="1.6" height="6.5"/>
<path d="M585.8,688.7 L589.2,685.8 L589.2,691.6 Z"/><path d="M593.4,688.7 L590,685.8 L590,691.6 Z"/>
</g>
<rect x="631" y="661" width="14" height="13" fill="none" stroke="#000" stroke-width="2"/>
<!-- spinner -->
<rect x="669.5" y="682.5" width="8.5" height="14" fill="#c8c8c8" stroke="#7a7a7a" stroke-width="0.6"/>
<path d="M670.8,688.8 L676.6,688.8 L673.7,685.4 Z M670.8,691.2 L676.6,691.2 L673.7,694.6 Z" fill="#000"/>
<line x1="669.5" y1="690" x2="678" y2="690" stroke="#8a8a8a" stroke-width="0.5"/>
<!-- time config -->
<rect x="685.6" y="683.4" width="10.5" height="12" fill="#f4f4f4" stroke="#000" stroke-width="1"/>
<rect x="685.6" y="683.4" width="10.5" height="2.2" fill="#000"/>
<circle cx="693.4" cy="691" r="3.6" fill="#f4f4f4" stroke="#d01010" stroke-width="1" stroke-dasharray="1.2,0.8"/>
<path d="M693.4,688.5 L693.4,691.2 L691.6,691.2" stroke="#000" stroke-width="0.8" fill="none"/>
<!-- viewport nav -->
<circle cx="713.5" cy="664.5" r="4.2" fill="#e8e8f4" stroke="#000090" stroke-width="1.4"/>
<line x1="716.6" y1="667.8" x2="722.5" y2="673.5" stroke="#000090" stroke-width="2"/>
<g stroke="#a01020" stroke-width="1.2" fill="none"><rect x="734.6" y="660.6" width="12.4" height="10.4"/><line x1="740.8" y1="660.6" x2="740.8" y2="671"/><line x1="734.6" y1="665.8" x2="747" y2="665.8"/></g>
<circle cx="736.5" cy="668.5" r="3.8" fill="#e8e8f4" stroke="#000090" stroke-width="1.3"/>
<line x1="739.2" y1="671.2" x2="742.5" y2="674.5" stroke="#000090" stroke-width="1.6"/>
<g stroke="#000" stroke-width="1.3" fill="none"><path d="M754.5,663 L754.5,660.5 L757,660.5 M767.5,660.5 L770,660.5 L770,663 M754.5,672.5 L754.5,675 L757,675 M770,672.5 L770,675 L767.5,675"/></g>
<path d="M757.5,664.8 L760.5,661.8 L767.5,661.8 L767.5,669 L764.5,672 L757.5,672 Z" fill="#c8c8d8" stroke="#000090" stroke-width="1.2"/>
<path d="M757.5,664.8 L764.5,664.8 L767.5,661.8 M764.5,664.8 L764.5,672" stroke="#000090" stroke-width="1" fill="none"/>
<path d="M764.5,664.8 L767.5,661.8 L767.5,669 L764.5,672 Z" fill="#707080"/>
<path d="M770.5,677.6 L774,677.6 L774,674.2 Z" fill="#000"/>
<g stroke="#a01020" stroke-width="1.2" fill="none"><rect x="782.4" y="660.6" width="10.6" height="10.4"/><line x1="787.7" y1="660.6" x2="787.7" y2="671"/><line x1="782.4" y1="665.8" x2="793" y2="665.8"/></g>
<path d="M777.8,668.5 L780.8,665.5 L786.8,665.5 L786.8,672 L783.8,675 L777.8,675 Z" fill="#dcdce8" stroke="#000090" stroke-width="1.2"/>
<path d="M777.8,668.5 L783.8,668.5 L786.8,665.5 M783.8,668.5 L783.8,675" stroke="#000090" stroke-width="1" fill="none"/>
<path d="M793.5,677.6 L797,677.6 L797,674.2 Z" fill="#000"/>
<!-- FOV -->
<path d="M707.6,682.5 L723.8,690 L707.6,697 Z" fill="#c8c8c8"/>
<path d="M707.6,683 L707.6,697 L716,692 L716,687.5 Z" fill="#909090" opacity="0.6"/>
<path d="M707.6,682.5 L723.8,690 L707.6,697" stroke="#000" stroke-width="1.3" fill="none"/>
<path d="M714.2,686.2 Q712,690 714.2,693.6" stroke="#000" stroke-width="1" fill="none"/>
<path d="M724,700.5 L727.5,700.5 L727.5,697 Z" fill="#000"/>
<!-- pan hand -->
<path d="M734,688 Q732,690 735,692.5 L738.5,696.5 L745,696.5 Q747.2,693 746.8,689 L746.8,685 Q745.6,683.6 744.4,685 L744.3,688 L744.2,683.6 Q743,682 741.8,683.6 L741.6,687.5 L741.5,682.8 Q740.2,681.2 739,682.8 L738.8,687.5 L738.6,684.5 Q737.4,683 736.2,684.5 L736.2,690 Z" fill="#e4e4e4" stroke="#000" stroke-width="1"/>
<path d="M747.5,700.5 L751,700.5 L751,697 Z" fill="#000"/>
<!-- orbit -->
<circle cx="762.5" cy="690" r="5.2" fill="none" stroke="#000" stroke-width="1" stroke-dasharray="1.4,0.8"/>
<path d="M762.5,682 L762.5,690 L769.5,690 M762.5,690 L756,696" stroke="#000090" stroke-width="1.2" fill="none"/>
<path d="M760.8,684 L762.5,681.5 L764.2,684 Z M768.5,688.3 L771,690 L768.5,691.7 Z M755,694 L754.6,697.4 L758,697 Z" fill="#000"/>
<path d="M770.5,700.5 L774,700.5 L774,697 Z" fill="#000"/>
<!-- maximize -->
<rect x="778.5" y="682.6" width="11" height="10.6" fill="none" stroke="#000090" stroke-width="1.4"/>
<path d="M784,688.6 L784,697.5 L793.2,697.5 L793.2,688.6 L789.5,688.6" stroke="#000" stroke-width="1.3" fill="none"/>
<path d="M781,685 L786.6,690.6" stroke="#000" stroke-width="0.9" stroke-dasharray="1,1"/>
<path d="M780.8,684.8 L783.6,685 L781,687.6 Z" fill="#000"/>
</svg>

<!-- /BOTTOM_SVG -->
</body></html>
